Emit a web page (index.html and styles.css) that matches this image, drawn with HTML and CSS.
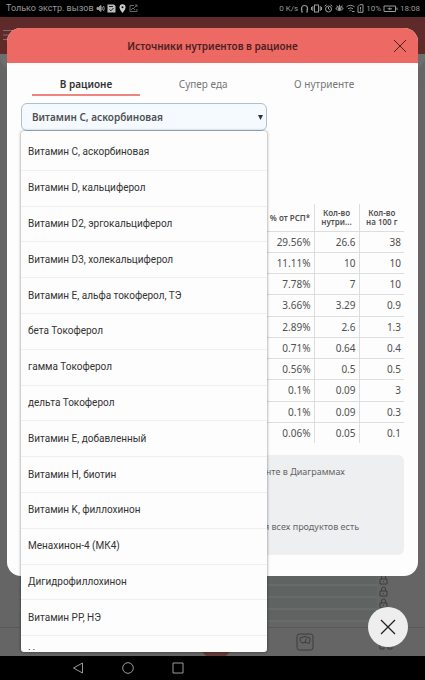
FILE: index.html
```html
<!DOCTYPE html>
<html lang="ru">
  <head>
    <meta charset="utf-8">
    <meta name="viewport" content="width=device-width, initial-scale=1">
    <title>Источники нутриентов в рационе</title>
    <link rel="stylesheet" href="styles.css">
  </head>
  <body>
    <header class="status">
      <span>Только экстр. вызов</span>
      <svg class="ic" viewBox="0 0 9 9"><path d="M1 3.5h1.5L5 1.5v6L2.500 5.500H1z" fill="#999"/><path d="M6 3q1 1.500 0 3M7.500 2q1.500 2.500 0 5"/></svg>
      <svg class="ic" viewBox="0 0 9 9"><path d="M.5.5h6.500l1.500 1.500v6.500h-8z" fill="#bbb" stroke="none"/><path d="M2 2.500h4M2.500 5.500l1.500 1.300 2.500-2.800" stroke="#222"/></svg>
      <svg class="ic" viewBox="0 0 9 9"><path d="M4.500 9C2 6 1.500 4.800 1.500 3.300a3 3 0 0 1 6 0C7.500 4.800 7 6 4.500 9z" fill="#ccc" stroke="none"/><circle cx="4.500" cy="3.300" r="1" fill="#000" stroke="none"/></svg>
      <svg class="ic dim" viewBox="0 0 9 9"><path d="M5 1.500H1v6h7V5M2 6l2-2 2 2M5 4l3-3M6 1h2v2"/></svg>
      <span class="status-right">0 K/s</span>
      <svg class="ic" viewBox="0 0 9 9"><path d="M1.500 6V4.500a3 3 0 0 1 6 0V6M1.800 5v3h1M7.200 5v3h-1" stroke-width="1.200"/></svg>
      <svg class="ic wide" viewBox="0 0 11 9"><rect x="3.500" y="1" width="4" height="7"/><path d="M1.800 2v5M9.200 2v5M.5 3v3M10.500 3v3"/></svg>
      <svg class="ic" viewBox="0 0 9 9"><circle cx="4.500" cy="5" r="3"/><path d="M4.500 3v2l1.300 1M.7 2.200L2.500.7M8.300 2.200L6.500.7"/></svg>
      <svg class="ic" viewBox="0 0 9 9"><path d="M.7 4.500q3.800-3.500 7.600 0-3.800 4-7.600 0M4.500.8v2M1.800 1.500l.8 1.500M7.200 1.500L6.400 3"/><circle cx="4.500" cy="4.700" r="1.200" fill="#aaa"/></svg>
      <svg class="ic" viewBox="0 0 9 9"><path d="M.5 2.800q4-3 8 0M2 4.800q2.500-2 5 0M3.500 6.600q1-.8 2 0M6 7.500h2.500"/></svg>
      <svg class="ic slim" viewBox="0 0 7 9"><path d="M1 2.500L2.800.7H6v7.600H1zM3.500 3v2.500M3.500 6.300v1"/></svg>
      <span>10%</span>
      <svg class="ic battery" viewBox="0 0 15 9"><path d="M1 2h11.500v5.500H1zM14 3.500v2.500M4.500 4.800h4.500M6.700 3.500v2.500"/></svg>
      <time>18:08</time>
    </header>

    <main class="screen">
      <div class="app" aria-hidden="true">
        <div class="app-header">
          <svg viewBox="0 0 12 12"><path d="M0 1.500h12M0 6h12M0 10.500h12"/></svg>
        </div>
        <div class="app-pill"></div>
        <div class="app-card"></div>
        <div class="app-rows">
          <div class="app-row"><svg viewBox="0 0 9 11"><path d="M2.500 5V3a2 2 0 0 1 4 0v2M1 5h7v5H1zM4.500 7v1"/></svg></div>
          <div class="app-row"><svg viewBox="0 0 9 11"><path d="M2.500 5V3a2 2 0 0 1 4 0v2M1 5h7v5H1zM4.500 7v1"/></svg></div>
          <div class="app-row"><svg viewBox="0 0 9 11"><path d="M2.500 5V3a2 2 0 0 1 4 0v2M1 5h7v5H1zM4.500 7v1"/></svg></div>
          <div class="app-row"></div>
        </div>
        <div class="app-tabs">
          <span></span>
          <span></span>
          <span class="app-add"></span>
          <svg viewBox="0 0 18 18"><rect x="1" y="1" width="16" height="16" rx="2.500"/><path d="M4 5q5-3 10 0 .5 3-1 5.500-1.500-1-4-1l-3 .5Q3.500 8 4 5zM9 9l1.500-3.500"/></svg>
          <svg viewBox="0 0 18 18"><path d="M3 3h4v4H3zM11 3h4v4h-4zM3 12h4v4H3zM11 12h4v4h-4z"/></svg>
        </div>
      </div>

      <section class="modal" role="dialog" aria-labelledby="modal-title">
        <div class="modal-header">
          <h1 id="modal-title">Источники нутриентов в рационе</h1>
          <button class="modal-close" type="button" aria-label="Закрыть">
            <svg viewBox="0 0 14 14"><path d="M1 1l12 12M13 1L1 13"/></svg>
          </button>
        </div>
        <div class="modal-body">
          <nav class="tabs">
            <button class="tab active" type="button">В рационе</button>
            <button class="tab" type="button">Супер еда</button>
            <button class="tab" type="button">О нутриенте</button>
          </nav>

          <div class="picker">
            <select aria-label="Нутриент">
              <option>Витамин C, аскорбиновая</option>
            </select>
            <svg class="arrow" viewBox="0 0 5 5"><path d="M0 0h5L2.500 5z"/></svg>
            <div class="popup">
              <div class="scroll">
                <ul>
                  <li><button type="button">Витамин C, аскорбиновая</button></li>
                  <li><button type="button">Витамин D, кальциферол</button></li>
                  <li><button type="button">Витамин D2, эргокальциферол</button></li>
                  <li><button type="button">Витамин D3, холекальциферол</button></li>
                  <li><button type="button">Витамин E, альфа токоферол, ТЭ</button></li>
                  <li><button type="button">бета Токоферол</button></li>
                  <li><button type="button">гамма Токоферол</button></li>
                  <li><button type="button">дельта Токоферол</button></li>
                  <li><button type="button">Витамин E, добавленный</button></li>
                  <li><button type="button">Витамин H, биотин</button></li>
                  <li><button type="button">Витамин K, филлохинон</button></li>
                  <li><button type="button">Менахинон-4 (МК4)</button></li>
                  <li><button type="button">Дигидрофиллохинон</button></li>
                  <li><button type="button">Витамин PP, НЭ</button></li>
                  <li><button type="button">Ниацин</button></li>
                </ul>
              </div>
            </div>
          </div>

          <table class="sources">
            <thead>
              <tr><th class="product"></th><th class="share">% от РСП*</th><th>Кол-во<br>нутри...</th><th>Кол-во<br>на 100 г</th></tr>
            </thead>
            <tbody>
              <tr><td></td><td>29.56%</td><td>26.6</td><td>38</td></tr>
              <tr><td></td><td>11.11%</td><td>10</td><td>10</td></tr>
              <tr><td></td><td>7.78%</td><td>7</td><td>10</td></tr>
              <tr><td></td><td>3.66%</td><td>3.29</td><td>0.9</td></tr>
              <tr><td></td><td>2.89%</td><td>2.6</td><td>1.3</td></tr>
              <tr><td></td><td>0.71%</td><td>0.64</td><td>0.4</td></tr>
              <tr><td></td><td>0.56%</td><td>0.5</td><td>0.5</td></tr>
              <tr><td></td><td>0.1%</td><td>0.09</td><td>3</td></tr>
              <tr><td></td><td>0.1%</td><td>0.09</td><td>0.3</td></tr>
              <tr><td></td><td>0.06%</td><td>0.05</td><td>0.1</td></tr>
            </tbody>
          </table>

          <div class="notes">
            <p>Смотрите подробную информацию о данном нутриенте в Диаграммах</p>
            <p>* РСП - рекомендуемая суточная потребность, не для всех продуктов есть данные</p>
          </div>
        </div>
      </section>

      <button class="fab" type="button" aria-label="Закрыть окно">
        <svg viewBox="0 0 16 16"><path d="M1 1l14 14M15 1L1 15"/></svg>
      </button>
    </main>

    <footer class="sysnav">
      <button type="button" aria-label="Назад"><svg viewBox="0 0 12 12"><path d="M10.500 1v10L1.500 6z"/></svg></button>
      <button type="button" aria-label="Домой"><svg viewBox="0 0 12 12"><circle cx="6" cy="6" r="5.300"/></svg></button>
      <button type="button" aria-label="Недавние"><svg viewBox="0 0 12 12"><path d="M1 1h10v10H1z"/></svg></button>
    </footer>
  </body>
</html>
```
FILE: styles.css
```css
* {
  box-sizing: border-box;
}
body {
  margin: 0;
  min-height: 100vh;
  display: flex;
  flex-direction: column;
  background: #000;
  color: #505050;
  font-family: "Noto Sans", "Open Sans", sans-serif;
}
button {
  margin: 0;
  padding: 0;
  border: 0;
  background: none;
  color: inherit;
  font: inherit;
}
svg {
  display: block;
  fill: none;
  stroke: currentColor;
}

/* system bars */
.status {
  display: flex;
  align-items: center;
  gap: 2px;
  height: 17px;
  padding: 0 5px 0 6px;
  color: #999;
  font: 8px/17px Roboto, sans-serif;
}
.status span:first-child {
  font-size: 9px;
}
.status-right {
  margin-left: auto;
}
.ic {
  width: 9px;
  height: 9px;
}
.wide {
  width: 11px;
}
.slim {
  width: 7px;
}
.battery {
  width: 15px;
}
.dim {
  color: #666;
}
.sysnav {
  display: flex;
  align-items: center;
  gap: 38px;
  height: 24px;
  padding-left: 72px;
  color: #999;
}
.sysnav svg {
  width: 12px;
  height: 12px;
}

/* dimmed app under the dialog */
.screen {
  position: relative;
  flex: 1;
  padding: 11px 7px 80px;
  background: #656565;
}
.app {
  position: absolute;
  inset: 0;
  display: flex;
  flex-direction: column;
  overflow: hidden;
  color: #3c3c3c;
}
.app-header {
  height: 37px;
  padding: 12px 3px;
  background: #5f2a2a;
  color: #8a6a6a;
}
.app-header svg {
  width: 12px;
  height: 12px;
}
.app-pill {
  height: 15px;
  border-radius: 0 0 12px 12px;
  background: #6e6e6e;
}
.app-card {
  flex: 1;
  margin-top: 10px;
  border-radius: 12px 12px 0 0;
  background: #656565;
}
.app-rows {
  padding: 0 48px 5px 20px;
}
.app-row {
  position: relative;
  height: 12px;
  border-bottom: 2px solid #676b69;
  background: #5f6361;
}
.app-row svg {
  position: absolute;
  right: -11px;
  top: 0;
  width: 9px;
  height: 11px;
}
.app-tabs {
  display: flex;
  align-items: center;
  justify-content: space-between;
  height: 29px;
  padding: 0 30px 0 36px;
  border-top: 1px solid #585858;
}
.app-tabs > * {
  width: 18px;
  height: 18px;
}
.app-tabs .app-add {
  width: 34px;
  height: 34px;
  border-radius: 50%;
  background: #683838;
}

/* dialog */
.modal {
  position: relative;
  border-radius: 14px;
  background: #fdfdfd;
}
.modal-header {
  display: flex;
  align-items: center;
  height: 35px;
  padding: 0 11px 0 25px;
  border-radius: 14px 14px 0 0;
  background: #ec6964;
  color: #4d2020;
}
.modal-header h1 {
  flex: 1;
  margin: 0;
  font-size: 10px;
  font-weight: 600;
  line-height: 16px;
  text-align: center;
}
.modal-close svg {
  width: 14px;
  height: 14px;
}
.modal-body {
  padding: 11px 14px 21px;
}
.tabs {
  display: flex;
  gap: 11px;
  padding: 0 22px 0 11px;
}
.tab {
  flex: auto;
  height: 22px;
  border-bottom: 2px solid transparent;
  color: #777;
  font-size: 10px;
  line-height: 20px;
}
.tab.active {
  border-color: #ee8580;
  color: #333;
  font-weight: 600;
}

.picker {
  position: relative;
  width: 246px;
  max-width: 100%;
  margin-top: 7px;
}
.picker select {
  display: block;
  width: 100%;
  height: 28px;
  padding: 0 20px 0 10px;
  appearance: none;
  border: 1px solid #adc1cb;
  border-radius: 6px;
  background: #f4faff;
  color: #505050;
  font: 600 10px/16px "Noto Sans", sans-serif;
}
.arrow {
  position: absolute;
  top: 12px;
  right: 4px;
  width: 5px;
  height: 5px;
  fill: #333;
  stroke: none;
}
.popup {
  position: absolute;
  z-index: 1;
  top: 28px;
  left: 0;
  width: 100%;
  height: 521px;
  padding: 4px 0 2px;
  border-radius: 3px;
  background: #fdfdfd;
  box-shadow: 0 0 3px rgba(0, 0, 0, .5);
}
.scroll {
  height: 100%;
  overflow: hidden;
}
.popup ul {
  display: grid;
  grid-auto-rows: 1fr;
  height: 537px;
  margin: 0;
  padding: 0;
  list-style: none;
}
.popup li {
  display: grid;
  border-bottom: 1px solid #efefef;
}
.popup button {
  padding: 0 7px;
  color: #333;
  font: 10px/14px Roboto, sans-serif;
  text-align: left;
}

.sources {
  width: 100%;
  height: 239px;
  margin-top: 73px;
  border-collapse: collapse;
  table-layout: fixed;
  font-size: 10px;
  line-height: 14px;
}
.sources th,
.sources td {
  width: 45px;
  padding: 0 3px;
  border-right: 1px solid #ddd;
  text-align: right;
}
.sources .product {
  width: auto;
}
.sources .share {
  width: 48px;
}
.sources th {
  height: 27px;
  padding: 0;
  font-size: 8px;
  font-weight: 600;
  line-height: 9px;
  text-align: center;
}
.sources th:last-child,
.sources td:last-child {
  border-right: 0;
}
.sources td {
  border-top: 1px solid #ddd;
}

.notes {
  margin-top: 12px;
  padding: 7px 20px 0 13px;
  min-height: 100px;
  border-radius: 6px;
  background: #eeeff1;
  color: #666;
  font-size: 9px;
  line-height: 19px;
}
.notes p {
  margin: 0 0 36px;
}
.notes p:last-child {
  margin: 0;
}

.fab {
  position: absolute;
  right: 17px;
  bottom: 9px;
  display: grid;
  place-items: center;
  width: 40px;
  height: 40px;
  border-radius: 50%;
  background: #eee;
  color: #222;
}
.fab svg {
  width: 16px;
  height: 16px;
  stroke-width: 1.3;
}
```
